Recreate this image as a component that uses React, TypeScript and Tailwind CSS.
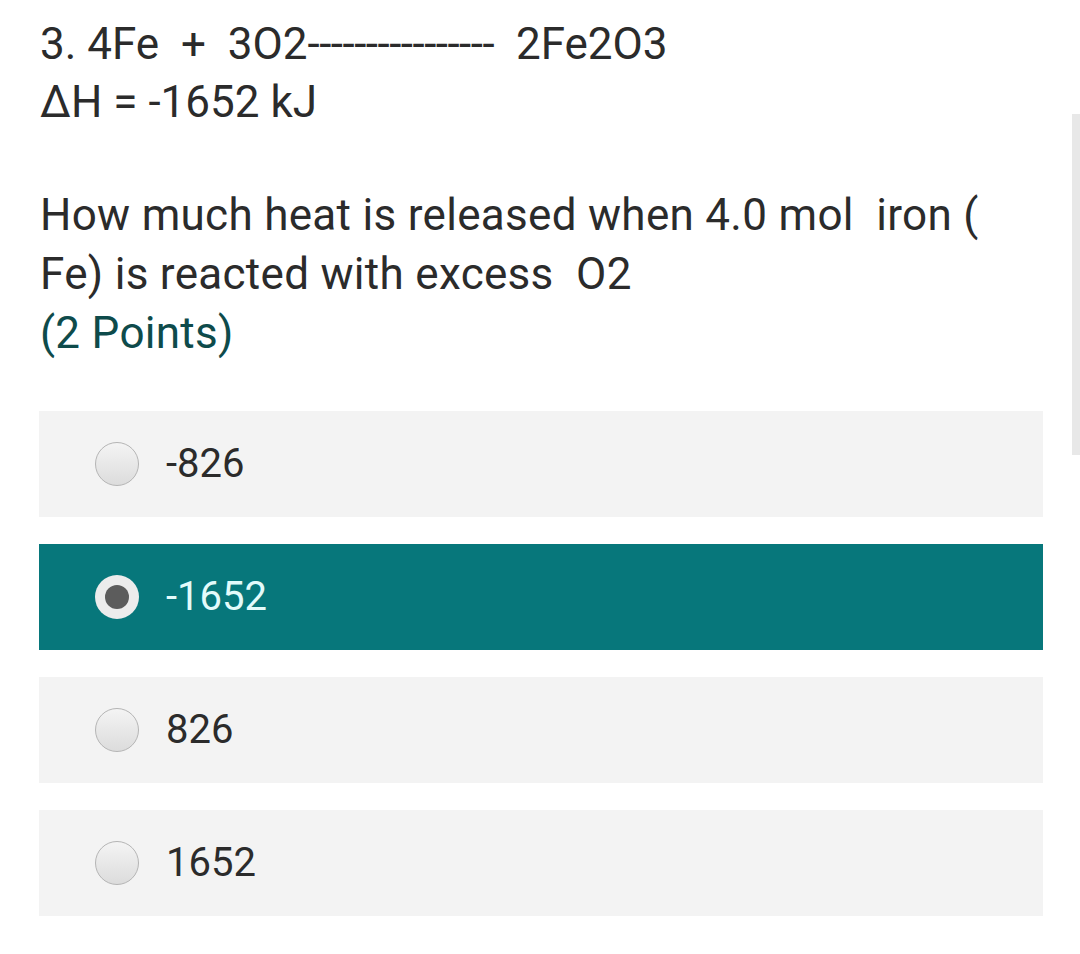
import React from "react";

const options = [
  { label: "-826", selected: false },
  { label: "-1652", selected: true },
  { label: "826", selected: false },
  { label: "1652", selected: false },
];

function Radio({ selected }: { selected: boolean }) {
  if (selected) {
    return (
      <div className="w-[44px] h-[44px] rounded-full bg-[#ececec] flex items-center justify-center shrink-0">
        <div className="w-[24px] h-[24px] rounded-full bg-[#5c5c5c]" />
      </div>
    );
  }
  return (
    <div className="w-[44px] h-[44px] rounded-full border border-[#b5b5b5] bg-gradient-to-b from-[#f4f4f4] to-[#dcdcdc] shrink-0" />
  );
}

export default function App() {
  return (
    <div
      className="relative w-[1080px] h-[954px] bg-white overflow-hidden"
      style={{ fontFamily: "Roboto, 'Liberation Sans', sans-serif" }}
    >
      <div className="absolute right-0 top-[114px] w-[8px] h-[341px] bg-[#e8e8e8]" />
      <div className="pl-[40px] pr-[37px] pt-[15px]">
        <div className="text-[44px] leading-[58px] text-[#2b2b2b]">
          <div className="whitespace-pre">
            3. 4Fe  +  3O2<span className="tracking-[-0.5px]">----------------</span>  2Fe2O3
          </div>
          <div>ΔH = -1652 kJ</div>
        </div>
        <div className="mt-[55px] text-[44px] leading-[59px] tracking-[0.3px] text-[#2b2b2b] whitespace-pre-wrap">
          <div>How much heat is released when 4.0 mol  iron (</div>
          <div>Fe) is reacted with excess  O2</div>
          <div className="text-[#0e4b4b]">(2 Points)</div>
        </div>
        <div className="mt-[48px] -ml-[1px] flex flex-col gap-[27px]">
          {options.map((o) => (
            <div
              key={o.label}
              className={
                o.selected
                  ? "h-[106px] bg-[#07777b] flex items-center pl-[56px]"
                  : "h-[106px] bg-[#f3f3f3] flex items-center pl-[56px]"
              }
            >
              <Radio selected={o.selected} />
              <span
                className={
                  o.selected
                    ? "ml-[27px] text-[40px] text-[#e3fbfb]"
                    : "ml-[27px] text-[40px] text-[#2b2b2b]"
                }
              >
                {o.label}
              </span>
            </div>
          ))}
        </div>
      </div>
    </div>
  );
}
